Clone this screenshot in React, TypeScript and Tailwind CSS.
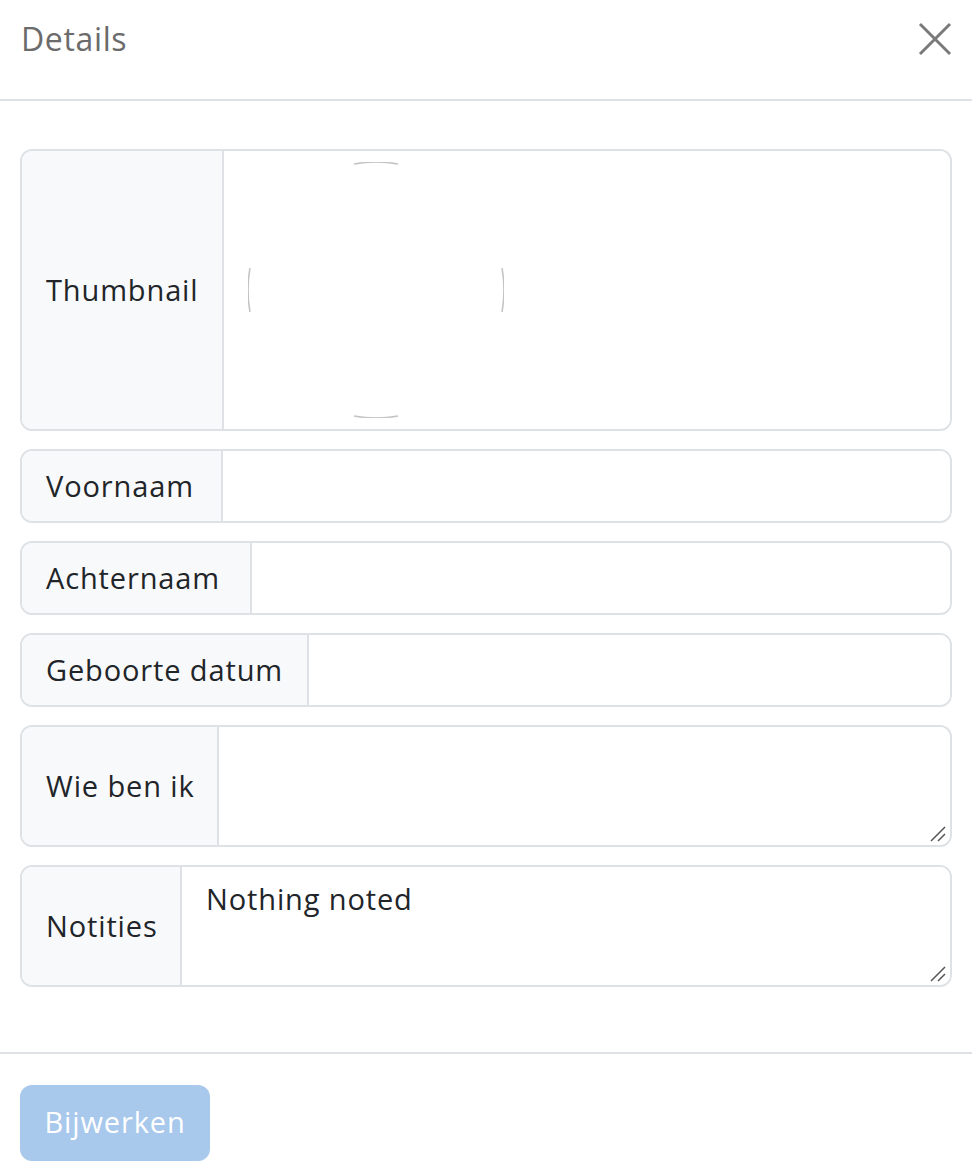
import React from "react";

const font = { fontFamily: '"Open Sans", "Noto Sans", sans-serif' };

function Row({ label, labelW, h, children }: { label: string; labelW: string; h: string; children: React.ReactNode }) {
  return (
    <div className={`flex shrink-0 ${h} rounded-[12px] border-2 border-[#dee2e6] overflow-hidden`}>
      <div className={`${labelW} shrink-0 flex items-center pl-6 whitespace-nowrap bg-[#f8f9fa] border-r-2 border-[#dee2e6] text-[29px] tracking-[0.03em] text-[#212529]`}>
        {label}
      </div>
      <div className="flex-1 bg-white flex relative">{children}</div>
    </div>
  );
}

function Placeholder() {
  // rounded image with faint edge arcs
  return (
    <svg width="256" height="256" viewBox="0 0 256 256" className="my-auto ml-6">
      <g fill="none" stroke="#c4c4c4" strokeWidth="1.5">
        <path d="M106 2 A126 126 0 0 1 150 2" />
        <path d="M106 254 A126 126 0 0 0 150 254" />
        <path d="M2 106 A126 126 0 0 0 2 150" />
        <path d="M254 106 A126 126 0 0 1 254 150" />
      </g>
    </svg>
  );
}

function Grip() {
  return (
    <svg width="18" height="18" viewBox="0 0 18 18" className="absolute right-[2px] bottom-[2px] pointer-events-none">
      <path d="M1 16 L15 2 M8 16 L15 9" stroke="#555" strokeWidth="1.5" />
    </svg>
  );
}

export default function App() {
  return (
    <div className="w-[972px] h-[1172px] bg-white flex flex-col" style={font}>
      <div className="h-[101px] shrink-0 flex items-center justify-between pl-[21px] pr-[20px] border-b-2 border-[#dee2e6]">
        <div className="text-[32px] tracking-[0.02em] text-[#6b6b6b] -mt-[22px]">Details</div>
        <svg width="34" height="34" viewBox="0 0 34 34" className="-mt-[21px]">
          <path d="M2 2 L32 32 M32 2 L2 32" stroke="#7a7a7a" strokeWidth="3" />
        </svg>
      </div>

      <div className="flex flex-col gap-[18px] px-5 pt-[48px] pb-[65px] shrink-0">
        <Row label="Thumbnail" labelW="w-[202px]" h="h-[282px]">
          <Placeholder />
        </Row>
        <Row label="Voornaam" labelW="w-[201px]" h="h-[74px]">
          <input className="flex-1 outline-none px-6 text-[28px]" />
        </Row>
        <Row label="Achternaam" labelW="w-[230px]" h="h-[74px]">
          <input className="flex-1 outline-none px-6 text-[28px]" />
        </Row>
        <Row label="Geboorte datum" labelW="w-[287px]" h="h-[74px]">
          <input className="flex-1 outline-none px-6 text-[28px]" />
        </Row>
        <Row label="Wie ben ik" labelW="w-[197px]" h="h-[122px]">
          <textarea className="flex-1 outline-none px-6 py-4 text-[28px] text-[#212529] resize-none" />
          <Grip />
        </Row>
        <Row label="Notities" labelW="w-[160px]" h="h-[122px]">
          <textarea
            className="flex-1 outline-none px-6 py-[13px] text-[29px] tracking-[0.03em] leading-[1.3] text-[#212529] resize-none"
            defaultValue="Nothing noted"
            style={font}
          />
          <Grip />
        </Row>
      </div>

      <div className="border-t-2 border-[#dee2e6] px-5 pt-[31px] shrink-0">
        <button className="w-[190px] h-[76px] rounded-[12px] bg-[#a8c8ec] text-white text-[29px] tracking-[0.03em] leading-none pb-[3px]">
          Bijwerken
        </button>
      </div>
    </div>
  );
}
